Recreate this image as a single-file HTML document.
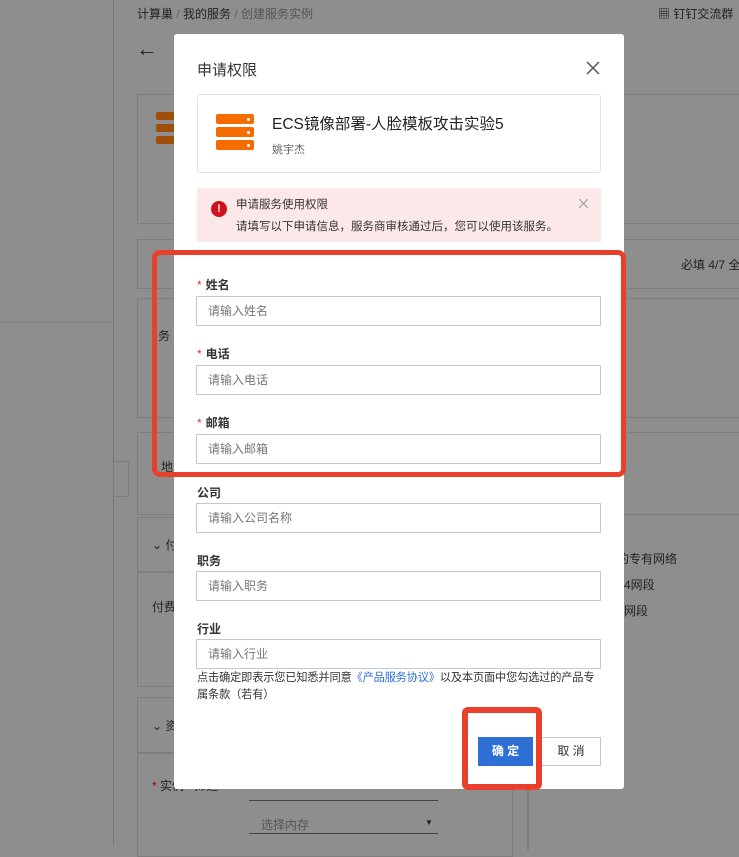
<!DOCTYPE html>
<html><head><meta charset="utf-8"><style>
*{box-sizing:border-box;margin:0;padding:0}
body{width:739px;height:846px;overflow:hidden;background:#8e8e8e;font-family:"Liberation Sans","Noto Sans CJK SC",sans-serif;position:relative;color:#333}
.a{position:absolute}
.bx{position:absolute;border:1px solid #7e7e7e}
.t{position:absolute;font-size:12px;color:#222;white-space:nowrap}
.m{position:absolute;left:174px;top:34px;width:450px;height:755px;background:#fff;border-radius:3px}
.lbl{position:absolute;left:23px;font-size:12px;color:#333;font-weight:bold}
.lbl b{color:#e5332a;margin-right:4px;font-weight:normal}
.in{position:absolute;left:22px;width:405px;height:30px;border:1px solid #c8c8c8;font-size:12px;color:#777;padding:8px 11px;line-height:13px}
</style></head><body>
<div class="a" style="left:113px;top:0;width:1px;height:846px;background:#7a7a7a"></div>
<div class="a" style="left:0;top:322px;width:113px;height:1px;background:#7f7f7f"></div>
<div class="t" style="left:137px;top:5px;color:#222">计算巢 <span style="color:#666">/</span> 我的服务 <span style="color:#666">/</span> <span style="color:#555">创建服务实例</span></div>
<div class="t" style="left:658px;top:5px">▦ 钉钉交流群</div>
<div class="t" style="left:136px;top:36px;font-size:22px;color:#222">←</div>
<div class="bx" style="left:137px;top:94px;width:620px;height:130px"></div>
<div class="a" style="left:156px;top:112px;width:20px;height:8px;background:#a04e0a;border-radius:2px"></div>
<div class="a" style="left:156px;top:124px;width:20px;height:8px;background:#a04e0a;border-radius:2px"></div>
<div class="a" style="left:156px;top:136px;width:20px;height:8px;background:#a04e0a;border-radius:2px"></div>
<div class="bx" style="left:137px;top:239px;width:620px;height:50px"></div>
<div class="t" style="left:681px;top:256px">必填 4/7 全</div>
<div class="bx" style="left:137px;top:298px;width:620px;height:120px"></div>
<div class="t" style="left:158px;top:327px">务</div>
<div class="bx" style="left:137px;top:432px;width:620px;height:83px"></div>
<div class="t" style="left:161px;top:458px">地</div>
<div class="bx" style="left:113px;top:461px;width:16px;height:36px"></div>
<div class="bx" style="left:137px;top:517px;width:376px;height:170px"></div>
<div class="bx" style="left:137px;top:571px;width:376px;height:1px"></div>
<div class="t" style="left:152px;top:536px">⌄ 付</div>
<div class="t" style="left:152px;top:598px">付费</div>
<div class="t" style="left:605px;top:550px">建的专有网络</div>
<div class="t" style="left:624px;top:576px">4网段</div>
<div class="t" style="left:624px;top:602px">网段</div>
<div class="bx" style="left:137px;top:697px;width:376px;height:160px"></div>
<div class="bx" style="left:137px;top:752px;width:376px;height:1px"></div>
<div class="bx" style="left:527px;top:690px;width:1px;height:160px"></div>
<div class="t" style="left:152px;top:717px">⌄ 资</div>
<div class="t" style="left:152px;top:777px"><span style="color:#a00">*</span> 实例 &nbsp; 筛选</div>
<div class="a" style="left:249px;top:800px;width:189px;height:1px;background:#444"></div>
<div class="t" style="left:261px;top:816px;color:#555">选择内存</div>
<div class="t" style="left:425px;top:818px;font-size:8px">▼</div>
<div class="a" style="left:249px;top:833px;width:189px;height:1px;background:#444"></div>

<div class="m">
<div class="a" style="left:23px;top:25px;font-size:15px;color:#333">申请权限</div>
<svg class="a" style="left:412px;top:27px" width="14" height="14" viewBox="0 0 14 14"><path d="M1 1L13 13M13 1L1 13" stroke="#555" stroke-width="1.5"/></svg>
<div class="a" style="left:23px;top:60px;width:404px;height:79px;border:1px solid #e2e2e2;border-radius:3px"></div>
<div class="a" style="left:42px;top:80px;width:38px;height:10px;background:#f56d00;border-radius:2px"></div>
<div class="a" style="left:42px;top:93px;width:38px;height:10px;background:#f56d00;border-radius:2px"></div>
<div class="a" style="left:42px;top:106px;width:38px;height:10px;background:#f56d00;border-radius:2px"></div>
<div class="a" style="left:73px;top:84px;width:3px;height:3px;background:#fff;border-radius:50%;box-shadow:0 13px #fff,0 26px #fff"></div>
<div class="a" style="left:98px;top:78px;font-size:15.5px;color:#222">ECS镜像部署-人脸模板攻击实验5</div>
<div class="a" style="left:98px;top:107px;font-size:11px;color:#666">姚宇杰</div>
<div class="a" style="left:23px;top:154px;width:404px;height:54px;background:#fce8e8"></div>
<div class="a" style="left:37px;top:167px;width:16px;height:16px;border-radius:50%;background:#d0101b;color:#fff;font-size:11px;font-weight:bold;text-align:center;line-height:16px">!</div>
<div class="a" style="left:62px;top:162px;font-size:11.5px;color:#333">申请服务使用权限</div>
<div class="a" style="left:62px;top:184px;font-size:11.5px;color:#333">请填写以下申请信息，服务商审核通过后，您可以使用该服务。</div>
<svg class="a" style="left:405px;top:165px" width="9" height="9"><path d="M0 0L9 9M9 0L0 9" stroke="#999" stroke-width="1"/></svg>
<div class="lbl" style="top:242px"><b>*</b>姓名</div><div class="in" style="top:262px">请输入姓名</div>
<div class="lbl" style="top:311px"><b>*</b>电话</div><div class="in" style="top:331px">请输入电话</div>
<div class="lbl" style="top:380px"><b>*</b>邮箱</div><div class="in" style="top:400px">请输入邮箱</div>
<div class="lbl" style="top:450px">公司</div><div class="in" style="top:469px">请输入公司名称</div>
<div class="lbl" style="top:518px">职务</div><div class="in" style="top:537px">请输入职务</div>
<div class="lbl" style="top:586px">行业</div><div class="in" style="top:605px">请输入行业</div>
<div class="a" style="left:23px;top:636px;width:406px;font-size:11.2px;letter-spacing:-0.15px;line-height:17px;color:#333">点击确定即表示您已知悉并同意<span style="color:#2e6fd6">《产品服务协议》</span>以及本页面中您勾选过的产品专属条款（若有）</div>
<div class="a" style="left:304px;top:703px;width:55px;height:29px;background:#2e6fd6;color:#fff;font-size:12px;text-align:center;line-height:29px;font-weight:bold">确 定</div>
<div class="a" style="left:367px;top:703px;width:60px;height:29px;border:1px solid #c8c8c8;color:#333;font-size:12px;text-align:center;line-height:27px">取 消</div>
</div>
<div class="a" style="left:152px;top:250px;width:474px;height:227px;border:5px solid #e8402a;border-radius:8px"></div>
<div class="a" style="left:462px;top:707px;width:80px;height:83px;border:6px solid #e8402a;border-radius:6px"></div>
</body></html>
